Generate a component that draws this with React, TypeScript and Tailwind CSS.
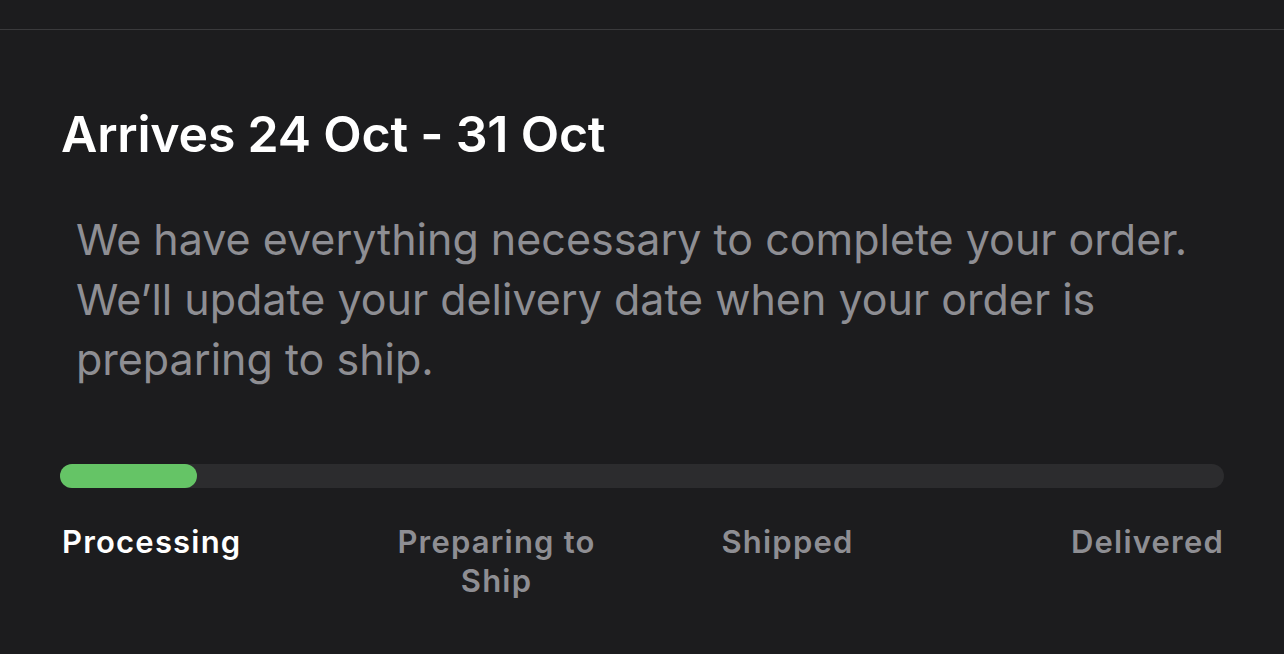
const steps = ['Processing', 'Preparing to Ship', 'Shipped', 'Delivered']

export default function App() {
  const current = 0

  return (
    <div className="min-h-[654px] w-full bg-[#1c1c1e] font-['Inter',sans-serif] text-white">
      <div className="h-[30px] border-b border-[#3a3a3c]" />

      <div className="px-[60px] pt-[74px]">
        <h1 className="pl-[1px] text-[50px] font-semibold leading-[60px] tracking-[-0.2px]">
          Arrives 24 Oct - 31 Oct
        </h1>

        <p className="mt-[45px] pl-[16px] pr-[20px] text-[43px] leading-[60px] text-[#8e8e93]">
          We have everything necessary to complete your order. We’ll update your delivery date
          when your order is preparing to ship.
        </p>

        <div className="mt-[75px] h-[24px] w-full rounded-full bg-[#2c2c2e]">
          <div className="h-full w-[137px] rounded-full bg-[#65c466]" />
        </div>

        <div className="mt-[34px] grid grid-cols-4">
          {steps.map((s, i) => (
            <div
              key={s}
              className={
                'text-[31px] font-semibold leading-[39px] tracking-[1.2px] ' +
                (i === 0 ? 'pl-[2px] text-left' : i === steps.length - 1 ? 'text-right' : 'text-center') +
                (i === current ? ' text-white' : ' text-[#8e8e93]')
              }
            >
              {i === 1 ? <span className="mx-auto block max-w-[240px]">{s}</span> : s}
            </div>
          ))}
        </div>
      </div>
    </div>
  )
}
